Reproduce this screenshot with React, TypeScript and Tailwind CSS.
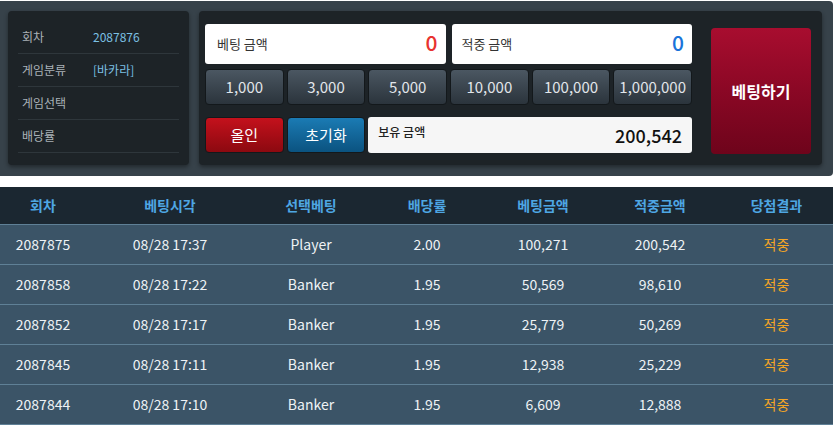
import React from "react";

const font = { fontFamily: '"Noto Sans CJK KR", "Noto Sans", sans-serif' };

const chips = ["1,000", "3,000", "5,000", "10,000", "100,000", "1,000,000"];

const rows = [
  { no: "2087875", time: "08/28 17:37", pick: "Player", rate: "2.00", bet: "100,271", win: "200,542" },
  { no: "2087858", time: "08/28 17:22", pick: "Banker", rate: "1.95", bet: "50,569", win: "98,610" },
  { no: "2087852", time: "08/28 17:17", pick: "Banker", rate: "1.95", bet: "25,779", win: "50,269" },
  { no: "2087845", time: "08/28 17:11", pick: "Banker", rate: "1.95", bet: "12,938", win: "25,229" },
  { no: "2087844", time: "08/28 17:10", pick: "Banker", rate: "1.95", bet: "6,609", win: "12,888" },
];

const cols = "grid grid-cols-[86px_168px_114px_118px_114px_120px_113px]";

export default function App() {
  return (
    <div className="w-[835px] h-[426px] bg-white overflow-hidden" style={font}>
      {/* Betting panel */}
      <div className="mt-px w-[833px] h-[175px] bg-[#37424a] rounded-r-[4px] flex gap-[10px] pl-[8px] pt-[10px]">
        {/* Round info */}
        <div className="w-[181px] h-[154px] bg-[#1d2327] rounded-[4px] shadow-[0_2px_4px_rgba(0,0,0,0.4)] px-[10px] pt-[9px]">
          {[
            ["회차", "2087876"],
            ["게임분류", "[바카라]"],
            ["게임선택", ""],
            ["배당률", ""],
          ].map(([label, value], i) => (
            <div
              key={label}
              className={`flex items-center border-b border-[#2e363b] ${i === 0 ? "h-[34px]" : "h-[33px]"}`}
            >
              <span className="w-[75px] pl-[4px] text-[12px] text-[#aab2b7]">{label}</span>
              <span className="text-[12px] text-[#7cc0e4]">{value}</span>
            </div>
          ))}
        </div>

        {/* Controls */}
        <div className="w-[623px] h-[154px] bg-[#1d2327] rounded-[4px] shadow-[0_2px_4px_rgba(0,0,0,0.4)] flex pl-[6px] pt-[13px]">
          <div className="w-[487px] flex flex-col">
            <div className="grid grid-cols-2 gap-[6px] h-[40px]">
              <div className="bg-white rounded-[3px] flex items-center justify-between pl-[12px] pr-[8px]">
                <span className="text-[13px] text-[#333]">베팅 금액</span>
                <span className="text-[21px] font-medium text-[#e8332f] leading-none mb-[4px]">0</span>
              </div>
              <div className="bg-white rounded-[3px] flex items-center justify-between pl-[10px] pr-[8px]">
                <span className="text-[13px] text-[#333]">적중 금액</span>
                <span className="text-[21px] font-medium text-[#1a73d9] leading-none mb-[4px]">0</span>
              </div>
            </div>
            <div className="grid grid-cols-6 gap-[3px] h-[36px] mt-[5px]">
              {chips.map((c) => (
                <button
                  key={c}
                  className="rounded-[4px] border border-[#13181b] bg-gradient-to-b from-[#4b5762] to-[#2b343c] text-[15px] text-[#e2e6ea]"
                >
                  {c}
                </button>
              ))}
            </div>
            <div className="grid grid-cols-6 gap-[3px] h-[36px] mt-[12px]">
              <button className="rounded-[4px] border border-[#13181b] bg-gradient-to-b from-[#c4111c] to-[#8c0910] text-[15px] text-white">
                올인
              </button>
              <button className="rounded-[4px] border border-[#13181b] bg-gradient-to-b from-[#1b7bb4] to-[#0b5380] text-[15px] text-white">
                초기화
              </button>
              <div className="col-span-4 bg-[#f6f6f6] rounded-[3px] flex justify-between items-center pl-[10px] pr-[10px]">
                <span className="text-[12px] font-medium text-[#222] self-start mt-[6px]">보유 금액</span>
                <span className="text-[18px] font-medium text-[#111]">200,542</span>
              </div>
            </div>
          </div>
          <button className="ml-[19px] mt-[4px] w-[100px] h-[126px] rounded-[4px] bg-gradient-to-b from-[#a80d2f] to-[#6e041b] text-[16px] font-bold text-white">
            베팅하기
          </button>
        </div>
      </div>

      {/* History table */}
      <div className="mt-[11px] w-[833px]">
        <div className={`${cols} h-[37px] items-center bg-[#1b2731] text-[14px] font-bold text-[#4ea6e3]`}>
          {["회차", "베팅시각", "선택베팅", "배당률", "베팅금액", "적중금액", "당첨결과"].map((h) => (
            <div key={h} className="text-center">{h}</div>
          ))}
        </div>
        {rows.map((r) => (
          <div
            key={r.no}
            className={`${cols} h-[40px] items-center bg-[#3b5467] border-t border-[#5f8096] text-[14px] text-[#eef2f5]`}
          >
            <div className="text-center">{r.no}</div>
            <div className="text-center">{r.time}</div>
            <div className="text-center">{r.pick}</div>
            <div className="text-center">{r.rate}</div>
            <div className="text-center">{r.bet}</div>
            <div className="text-center">{r.win}</div>
            <div className="text-center text-[#f5a524]">적중</div>
          </div>
        ))}
        <div className="h-px bg-[#5f8096]" />
      </div>
    </div>
  );
}
